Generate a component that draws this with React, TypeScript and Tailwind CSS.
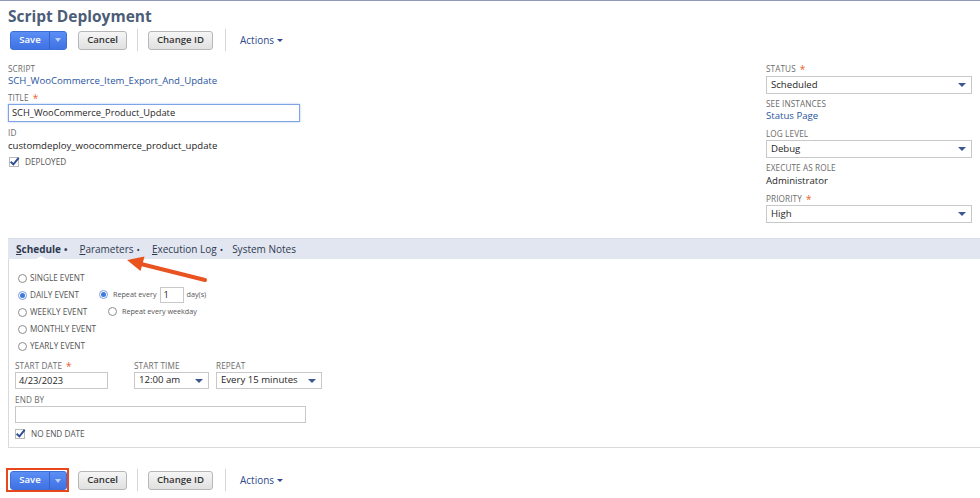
import type { ReactNode } from "react";

const label = "text-[8.2px] leading-[11px] uppercase text-[#6b6b6b] tracking-[0.1px]";
const value = "text-[9.6px] leading-[13px] text-[#262626]";
const link = "text-[9.6px] leading-[13px] text-[#2a55a0]";

function Req() {
  return <span className="ml-[4px] text-[#e8622a] text-[10px] leading-none">*</span>;
}

function Caret() {
  return (
    <span className="h-0 w-0 border-l-[4px] border-r-[4px] border-t-[4px] border-l-transparent border-r-transparent border-t-[#3b5791]" />
  );
}

function Select({ text, className }: { text: string; className: string }) {
  return (
    <div
      className={`flex items-center justify-between border border-[#c8c8c8] bg-white pl-[4px] pr-[5px] text-[9.6px] text-[#262626] ${className}`}
    >
      <span>{text}</span>
      <Caret />
    </div>
  );
}

function Check({ text }: { text: string }) {
  return (
    <div className="flex items-center h-[12px]">
      <span className="relative h-[10px] w-[10px] border border-[#b9b9b9] bg-white">
        <svg viewBox="0 0 10 10" className="absolute -left-[1px] -top-[2px] h-[11px] w-[11px]">
          <path d="M1.5 5.2 L4 7.6 L8.8 1.8" fill="none" stroke="#2f4f8c" strokeWidth="1.8" />
        </svg>
      </span>
      <span className="ml-[6px] text-[8.2px] uppercase text-[#555]">{text}</span>
    </div>
  );
}

function Radio({ on, text, small }: { on?: boolean; text: string; small?: boolean }) {
  return (
    <div className="flex items-center h-[17px] whitespace-nowrap">
      <span
        className={`flex h-[9px] w-[9px] shrink-0 items-center justify-center rounded-full border ${on ? "border-[#7aa0e0] bg-white" : "border-[#8d8d8d] bg-white"}`}
      >
        {on && <span className="h-[5px] w-[5px] rounded-full bg-[#3f79de]" />}
      </span>
      <span className={small ? "ml-[5px] text-[7.2px] text-[#555]" : "ml-[3px] text-[8.2px] uppercase text-[#555]"}>
        {text}
      </span>
    </div>
  );
}

function Btn({ children, w }: { children: ReactNode; w: string }) {
  return (
    <div
      className={`flex h-[19px] ${w} items-center justify-center rounded-[3px] border border-[#b7b7b7] bg-linear-to-b from-[#f6f6f6] to-[#e0e0e0] text-[9.6px] font-semibold text-[#333]`}
    >
      {children}
    </div>
  );
}

function SaveBtn() {
  return (
    <div className="flex h-[19px] w-[57px] overflow-hidden rounded-[3px] border border-[#3d6fd6] bg-linear-to-b from-[#5b8ef5] to-[#3f72e3] text-white">
      <div className="flex w-[38px] items-center justify-center text-[9.6px] font-semibold">Save</div>
      <div className="flex flex-1 items-center justify-center border-l border-[#3562c4]">
        <span className="h-0 w-0 border-l-[3px] border-r-[3px] border-t-[4px] border-l-transparent border-r-transparent border-t-[#bcd0f7]" />
      </div>
    </div>
  );
}

function ButtonRow({ boxed }: { boxed?: boolean }) {
  return (
    <div className="flex items-center">
      {boxed ? (
        <div className="ml-[6px] border-2 border-[#e8471c] pl-[2px] pt-[1px]">
          <SaveBtn />
        </div>
      ) : (
        <div className="ml-[10px]">
          <SaveBtn />
        </div>
      )}
      <div className={boxed ? "ml-[9px]" : "ml-[11px]"}>
        <Btn w="w-[49px]">Cancel</Btn>
      </div>
      <div className="mx-[10px] h-[22px] w-px bg-[#d6d6d6]" />
      <Btn w="w-[65px]">Change ID</Btn>
      <div className="ml-[12px] mr-[14px] h-[22px] w-px bg-[#d6d6d6]" />
      <div className="flex items-center text-[10px] text-[#2f4a8c]">
        Actions
        <span className="ml-[3px] h-0 w-0 border-l-[3px] border-r-[3px] border-t-[3px] border-l-transparent border-r-transparent border-t-[#2f4a8c]" />
      </div>
    </div>
  );
}

export default function App() {
  return (
    <div className="relative h-[498px] w-[980px] overflow-hidden bg-white font-['Open_Sans',sans-serif]">
      <div className="h-px bg-[#8e9ab6]" />
      <div className="pl-[8px] pt-[5px] text-[15.5px] font-bold leading-[20px] text-[#4c5d78]">Script Deployment</div>
      <div className="mt-[3px]">
        <ButtonRow />
      </div>

      <div className="flex items-start justify-between">
        <div className="ml-[8px] mt-[12px] flex flex-col">
          <div className={label}>Script</div>
          <div className={link}>SCH_WooCommerce_Item_Export_And_Update</div>
          <div className={`${label} mt-[5px] flex items-center`}>
            Title
            <Req />
          </div>
          <div className="mt-[1px] flex h-[18px] w-[292px] items-center border border-[#7fa4e4] bg-white pl-[3px] text-[9.3px] text-[#262626] shadow-[0_0_2px_#a9c3f0]">
            SCH_WooCommerce_Product_Update
          </div>
          <div className={`${label} mt-[5px]`}>ID</div>
          <div className={`${value} mt-[1px]`}>customdeploy_woocommerce_product_update</div>
          <div className="ml-px mt-[4px]">
            <Check text="Deployed" />
          </div>
        </div>

        <div className="mr-[8px] mt-[12px] flex w-[206px] flex-col">
          <div className={`${label} flex items-center`}>
            Status
            <Req />
          </div>
          <Select text="Scheduled" className="mt-[2px] h-[18px]" />
          <div className={`${label} mt-[4px]`}>See Instances</div>
          <div className={link}>Status Page</div>
          <div className={`${label} mt-[6px]`}>Log Level</div>
          <Select text="Debug" className="mt-[1px] h-[18px]" />
          <div className={`${label} mt-[4px]`}>Execute as Role</div>
          <div className={`${value} mt-[1px]`}>Administrator</div>
          <div className={`${label} mt-[6px] flex items-center`}>
            Priority
            <Req />
          </div>
          <Select text="High" className="mt-[1px] h-[18px]" />
        </div>
      </div>

      <div className="relative ml-[8px] mt-[15px] flex h-[21px] items-center gap-[12px] border-t border-[#d9dde8] bg-[#e2e6f0] pl-[8px] text-[10px] text-[#2e3a50]">
        <span className="font-bold">
          <span className="underline">S</span>chedule<span className="ml-[3px] text-[9px]">•</span>
        </span>
        <span>
          <span className="underline">P</span>arameters<span className="ml-[3px] text-[9px]">•</span>
        </span>
        <span>
          <span className="underline">E</span>xecution Log<span className="ml-[3px] text-[9px]">•</span>
        </span>
        <span className="-ml-[3px]">System Notes</span>
        <span className="absolute bottom-0 left-[28px] h-0 w-0 border-b-[3px] border-l-[5px] border-r-[5px] border-b-white border-l-transparent border-r-transparent" />
      </div>

      <div className="ml-[8px] h-[189px] border-b border-l border-[#dadada] pl-[6px] pt-[11px]">
        <div className="flex">
          <div className="w-[84px] shrink-0 pl-[3px]">
            <Radio text="Single Event" />
            <Radio on text="Daily Event" />
            <Radio text="Weekly Event" />
            <Radio text="Monthly Event" />
            <Radio text="Yearly Event" />
          </div>
          <div className="mt-[16px] flex flex-col">
            <div className="flex h-[17px] items-center">
              <Radio on small text="Repeat every" />
              <div className="ml-[3px] flex h-[16px] w-[24px] items-center border border-[#c8c8c8] pl-[3px] text-[9.3px] text-[#262626]">
                1
              </div>
              <span className="ml-[3px] text-[7.2px] text-[#555]">day(s)</span>
            </div>
            <div className="pl-[9px]">
              <Radio small text="Repeat every weekday" />
            </div>
          </div>
        </div>

        <div className="mt-[5px] flex">
          <div className="w-[119px]">
            <div className={`${label} flex items-center`}>
              Start Date
              <Req />
            </div>
            <div className="mt-[1px] flex h-[17px] w-[93px] items-center border border-[#c8c8c8] pl-[3px] text-[9.3px] text-[#262626]">
              4/23/2023
            </div>
          </div>
          <div className="w-[82px]">
            <div className={label}>Start Time</div>
            <Select text="12:00 am" className="mt-[1px] h-[17px] w-[75px]" />
          </div>
          <div>
            <div className={label}>Repeat</div>
            <Select text="Every 15 minutes" className="mt-[1px] h-[17px] w-[106px]" />
          </div>
        </div>

        <div className={`${label} mt-[5px]`}>End By</div>
        <div className="mt-[1px] h-[17px] w-[291px] border border-[#c8c8c8] bg-white" />
        <div className="mt-[5px]">
          <Check text="No End Date" />
        </div>
      </div>

      <div className="mt-[20px]">
        <ButtonRow boxed />
      </div>

      <svg className="pointer-events-none absolute left-0 top-0" width="980" height="498">
        <line x1="205" y1="280" x2="141" y2="264" stroke="#e9531f" strokeWidth="4" strokeLinecap="round" />
        <polygon points="127,260 144.5,256.5 140.5,271" fill="#e9531f" />
      </svg>
    </div>
  );
}
